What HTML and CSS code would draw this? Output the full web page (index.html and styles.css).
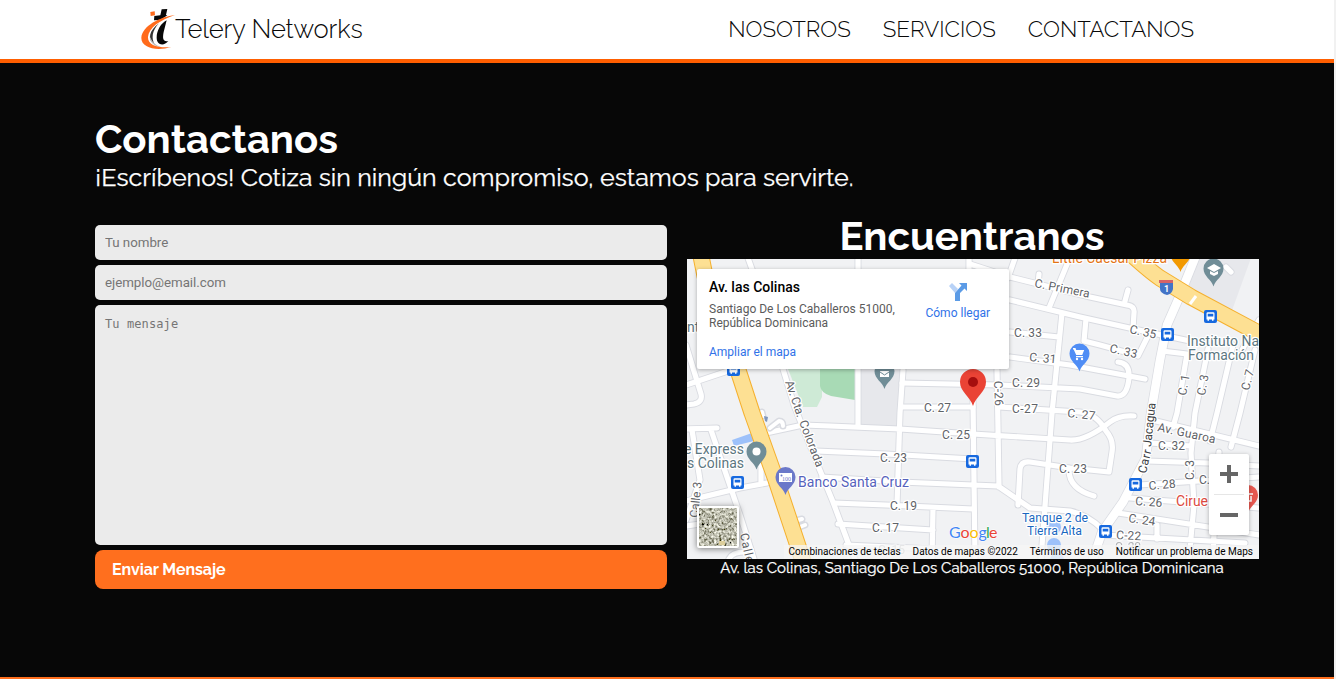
FILE: index.html
```html
<!DOCTYPE html>
<html lang="es">
<head>
<meta charset="utf-8">
<title>Telery Networks</title>
<link rel="stylesheet" href="styles.css">
</head>
<body>
<header class="header">
  <a class="brand">
    <svg class="logo" viewBox="24 24 114 126" aria-hidden="true">
      <path fill="#ff6b1c" d="M58 36l13-2 1 12-13 2z"/>
      <path fill="#080808" d="M70 48l18-2 4-18 17-1-4 18 4 1-12 8-12 6-16 1zM107 61C90 70 77 91 77 113c0 22 21 27 35 10-16 3-18-7-14-27z"/>
      <path fill="#333" d="M84 70c-30 21-36 50-13 64-10-18-9-41 13-64z"/>
      <path fill="#bbb" d="M56 108c0 20 14 32 35 33-18-5-28-15-35-33z"/>
      <path fill="#ff6b1c" d="M132 45C88 50 33 78 31 113c-1 30 45 42 90 28-42 3-71-6-70-30 2-27 37-52 81-66z"/>
    </svg>
    <span class="brand-name">Telery Networks</span>
  </a>
  <nav class="nav"><a>NOSOTROS</a><a>SERVICIOS</a><a>CONTACTANOS</a></nav>
</header>
<main class="contact">
  <h1 class="title">Contactanos</h1>
  <p class="lead">¡Escríbenos! Cotiza sin ningún compromiso, estamos para servirte.</p>
  <div class="columns">
    <form class="form">
      <input class="field" type="text" placeholder="Tu nombre">
      <input class="field" type="email" placeholder="ejemplo@email.com">
      <textarea class="field message" placeholder="Tu mensaje"></textarea>
      <button class="send" type="button">Enviar Mensaje</button>
    </form>
    <section class="find">
      <h2 class="title find-title">Encuentranos</h2>
      <div class="map">
        <svg class="map-canvas" viewBox="687 259 572 300">
          <defs>
            <g id="roads">
              <path d="M748 258l5 14M783 369l11 36 25 63 14 34 16 43 6 14M858 258v168M686 345l15 49q2 8-7 10l-8 1M686 385l42-14M686 429l31-1M711 430l30 88 13 41M686 501l54-13 27-5M761 483v-18M692 430l8 50-14 40M686 526l14-2M729 559q3-7 16-7"/>
              <path d="M766 433l37-8 27 1 70 3 73 5 97 6q16 1 40-18 9-7 24-6M816 451l70 3 87 5M822 477l78 5 98 4 32 22 40 3q18 4 32 18M834 503l52 2 87 4M838 524l95 6M846 545l87 4M903 370l-3 43-3 92M933 508l-1 51M969 258v12M973 400l2 159M997 370l2 117"/>
              <path d="M902 383l98 2 80 4 37 7q10 1 12-18 1-15-11-16M901 407h72M999 407l81 5q17 2 26 19 8 9 6 21l-3 20-39-4-40-6q-9-1-10 7l-2 36M1010 332l49 5M1010 357l60 8 75 14M1010 300l70 17 54 12 56 12M970 264l40 13 80 20 37 8q8 1 7 8l-1 15M1125 301l3-11M1015 258l-7 20M1039 274l-1 10M1068 262l-19 46M1062 313l-10 100-11 146M1086 319l-2 22q25 6 54 15l10-20"/>
              <path d="M1162 351l25 3-10 59-4 14M1208 349l-13 64-4 40 3 52-5 54M1233 345l-16 68-7 28M1255 350l-15 63-9 34M1259 320l-17 30M1219 452l-6 100M1152 420l107 26M1150 443l41 3M1147 461l61 2 51 3M1139 485l120-8M1130 498l129 10M1118 513l141 22M1104 535l141 8M1157 525v14M1069 470q0 19 25 26M1226 267l5 5"/>
            </g>
            <path id="carr" d="M1195 258l-17 42-11 25-7 35-9 53-5 45-23 44-21 30-9 27"/>
            <path id="hwy" d="M701 256l4 20 33 94 14 43 24 67 27 81M1131 254q20 18 29 24l31 19 75 40"/>
            <g id="bus">
              <rect x="-6.5" y="-6.5" width="13" height="13" rx="2" fill="#1769df"/>
              <path fill="#fff" fill-rule="evenodd" d="M-4-3q0-1.3 1.3-1.3h5.4Q4-4.300 4-3v6H3v1.300H1.500V3h-3v1.300H-3V3h-1zM-2.800-2.800v2.700h5.600v-2.700z"/>
            </g>
            <path id="pin" d="M0 17C-2 10-10 7-10-1a10 10 0 0 1 20 0C10 7 2 10 0 17z"/>
          </defs>
          <rect x="687" y="259" width="572" height="300" fill="#f1f2f4"/>
          <path fill="#e7e8ec" d="M861 369h40l-3 58-38-1zM1196 258h55l-21 58-44-24z"/>
          <path fill="#ceead6" d="M788 369h34v28l-5 10h-14z"/>
          <path fill="#a8dab5" d="M820 369h35v31l-24-4q-10-3-11-10z"/>
          <path fill="#9dc1fa" d="M732 440l20-7 2 8-20 5z"/>
          <use href="#roads" class="casing"/><use href="#carr" class="casing wide"/>
          <use href="#roads" class="road"/><use href="#carr" class="road wide"/>
          <path class="casing" d="M763 416l-1-4M770 428l9-7q4 0 4 5M794 521l8-2M797 528l8-3"/>
          <path class="road small" d="M763 416l-1-4M770 428l9-7q4 0 4 5M794 521l8-2M797 528l8-3"/>
          <use href="#hwy" class="hwy-edge"/><use href="#hwy" class="hwy"/>
          <path stroke="#fff" stroke-width="3" d="M1190 304l6-8"/>
          <path fill="#8097bd" d="M764 416l4 1-1 5-2-1z"/>
          <g fill="#9dc1fa"><circle cx="1054" cy="527" r="7"/><circle cx="1054" cy="545" r="7"/><circle cx="1057" cy="560" r="7"/></g>

          <g class="street">
            <text x="1034" y="287" textLength="56" transform="rotate(11 1034 287)">C. Primera</text>
            <text x="1014" y="337" textLength="28">C. 33</text>
            <text x="1029" y="361" textLength="27" transform="rotate(5 1029 361)">C. 31</text>
            <text x="1012" y="387" textLength="28">C. 29</text>
            <text x="924" y="412" textLength="27">C. 27</text>
            <text x="1012" y="413" textLength="26">C-27</text>
            <text x="1067" y="417" textLength="28" transform="rotate(6 1067 417)">C. 27</text>
            <text x="1129" y="333" textLength="27" transform="rotate(12 1129 333)">C. 35</text>
            <text x="1109" y="352" textLength="28" transform="rotate(13 1109 352)">C. 33</text>
            <text x="942" y="439" textLength="28">C. 25</text>
            <text x="880" y="462" textLength="27">C. 23</text>
            <text x="1059" y="473" textLength="28">C. 23</text>
            <text x="890" y="510" textLength="27">C. 19</text>
            <text x="872" y="532" textLength="27">C. 17</text>
            <text x="878" y="554" textLength="27" opacity=".45">C. 15</text>
            <text x="994" y="381" textLength="25" transform="rotate(88 994 381)">C-26</text>
            <text x="1186" y="396" textLength="21" transform="rotate(-80 1186 396)">C. 1</text>
            <text x="1205" y="396" textLength="21" transform="rotate(-80 1205 396)">C. 3</text>
            <text x="1249" y="391" textLength="21" transform="rotate(-76 1249 391)">C. 7</text>
            <text x="1194" y="480" textLength="20" transform="rotate(-90 1194 480)">C. 3</text>
            <text x="1157" y="431" textLength="59" transform="rotate(12 1157 431)">Av. Guaroa</text>
            <text x="1158" y="450" textLength="27">C. 32</text>
            <text x="1149" y="490" textLength="27" transform="rotate(-5 1149 490)">C. 28</text>
            <text x="1199" y="484" textLength="11">C.</text>
            <text x="1135" y="505" textLength="27" transform="rotate(4 1135 505)">C. 26</text>
            <text x="1128" y="522" textLength="27" transform="rotate(8 1128 522)">C. 24</text>
            <text x="1116" y="539" textLength="25" transform="rotate(3 1116 539)">C-22</text>
            <text x="1115" y="551" textLength="26" opacity=".45">C. 20</text>
            <text x="785" y="382" textLength="38" transform="rotate(71 785 382)">Av. Cta.</text>
            <text x="799" y="422" textLength="49" transform="rotate(69 799 422)">Colorada</text>
            <text x="698" y="518" textLength="36" transform="rotate(-84 698 518)">Calle 3</text>
            <text x="740" y="534" textLength="30" transform="rotate(78 740 534)">Calle</text>
            <text class="dark" x="1146" y="474" textLength="24" transform="rotate(-77 1146 474)">Carr</text>
            <text class="dark" x="1151" y="447" textLength="44" transform="rotate(-84 1151 447)">Jacagua</text>
          </g>
          <g class="poi">
            <text x="687" y="332" fill="#5c7680">nt</text>
            <text x="684" y="454" textLength="60" fill="#5c7680">e Express</text>
            <text x="687" y="468" textLength="57" fill="#5c7680">s Colinas</text>
            <text x="798" y="487" textLength="111" fill="#5662bc">Banco Santa Cruz</text>
            <text x="1187" y="346" textLength="72" fill="#5c7680">Instituto Na</text>
            <text x="1188" y="360" textLength="66" fill="#5c7680">Formación</text>
            <text x="1052" y="263" textLength="115" fill="#e37416">Little Caesar Pizza</text>
            <text x="1176" y="506" textLength="32" fill="#dd4940">Cirue</text>
            <text class="tank" x="1022" y="522" textLength="66">Tanque 2 de</text>
            <text class="tank" x="1027" y="535" textLength="55">Tierra Alta</text>
          </g>
          <use href="#bus" x="733.5" y="369.5"/><use href="#bus" x="737.5" y="482.5"/><use href="#bus" x="972.5" y="461.5"/><use href="#bus" x="1210.5" y="316.5"/><use href="#bus" x="1167.5" y="334.5"/><use href="#bus" x="1135.5" y="484.5"/><use href="#bus" x="1105.5" y="531.5"/>
          <path fill="#4274c7" d="M1160 283h13v6q-1 5-6 6-7-2-7-6z"/><path fill="#d66368" d="M1159 280h14v3h-14z"/>
          <text x="1164" y="292" class="shield">1</text>
          <g fill="#708d97"><use href="#pin" x="1213.5" y="269.5"/><use href="#pin" x="884.5" y="372"/><use href="#pin" x="756.5" y="452.5"/></g>
          <path fill="#fff" d="M1207 268l7-4 7 4-7 4zM1210 271l4 2 4-2v3l-4 2-4-2zM880 371h9v6h-9z"/>
          <path stroke="#708d97" fill="none" d="M880 372l4.500 3 4.500-3"/>
          <circle cx="756.5" cy="451.5" r="4" fill="#fff"/>
          <use href="#pin" x="785.5" y="478" fill="#6b78c9"/><rect x="779" y="473" width="13" height="9" fill="#fff"/><text x="782" y="481" class="bill">100</text><circle cx="781.500" cy="475.500" r="1" fill="#6b78c9"/>
          <use href="#pin" x="1079.5" y="354.5" fill="#4f8df5"/><path fill="#fff" d="M1073 348h2.500l.7 2h8l-2 5h-6l-2.500-5.500H1073zM1076 356h7v1.300h-7z"/><circle cx="1077" cy="359" r="1.200" fill="#fff"/><circle cx="1082" cy="359" r="1.200" fill="#fff"/>
          <use href="#pin" x="1180.5" y="255" fill="#f29900"/>
          <use href="#pin" x="1248" y="496" fill="#e65850"/><path fill="none" stroke="#fff" stroke-width="1.500" d="M1246 494h7M1251 496v5h-4"/>
          <path fill="#ea4335" d="M973 406c-3-10-13-14-13-24a13 13 0 0 1 26 0c0 10-10 14-13 24z"/><circle cx="973" cy="382" r="5" fill="#a50e0e"/>
          <g class="google"><text x="949" y="538" fill="#4285f4">G</text><text x="960.500" y="538" fill="#ea4335">o</text><text x="969.500" y="538" fill="#fbbc04">o</text><text x="978.500" y="538" fill="#4285f4">g</text><text x="986" y="538" fill="#34a853">l</text><text x="989" y="538" fill="#ea4335">e</text></g>
        </svg>
        <div class="place">
          <div class="place-info">
            <strong class="place-name">Av. las Colinas</strong>
            <span class="place-address">Santiago De Los Caballeros 51000,<br>República Dominicana</span>
            <a class="link">Ampliar el mapa</a>
          </div>
          <a class="link route">
            <svg class="route-icon" viewBox="0 0 20 20"><path fill="#b8d2f7" d="M1 4l3-3 6 6-3 4z"/><path fill="#5b9be6" d="M11 1h8v8l-2.500-2.500L12 11v8H7v-8l6.500-7.500z"/></svg>
            Cómo llegar
          </a>
        </div>
        <svg class="satellite" viewBox="0 0 42 42">
          <filter id="grain" x="0" y="0" width="1" height="1"><feTurbulence type="fractalNoise" baseFrequency=".4" numOctaves="3" seed="8"/><feColorMatrix values="1.2 .9 0 0 -.55  1.2 .9 0 0 -.55  1.1 .85 0 0 -.56  0 0 0 0 1"/></filter>
          <rect width="42" height="42" rx="2" fill="#fff"/><rect x="2" y="2" width="38" height="38" filter="url(#grain)"/>
          <path fill="#ddcf9c" d="M22 35h6v4h-6z"/>
        </svg>
        <div class="zoom"><span class="zoom-in"></span><i class="rule"></i><span class="zoom-out"></span></div>
        <div class="credits"><span>Combinaciones de teclas</span><span>Datos de mapas ©2022</span><span>Términos de uso</span><span>Notificar un problema de Maps</span></div>
      </div>
      <p class="address">Av. las Colinas, Santiago De Los Caballeros 51000, República Dominicana</p>
    </section>
  </div>
</main>
</body>
</html>
```
FILE: styles.css
```css
* { box-sizing: border-box; }
html { background: #f1f1f1; }
body { margin: 0; width: 1334px; height: 679px; overflow: hidden; font-family: Raleway, Lato, sans-serif; }
h1, h2, p { margin: 0; }
.header { height: 63px; background: #fff; border-bottom: 4px solid #ff5e00; padding: 0 140px 0 139px; display: flex; justify-content: space-between; color: #080808; font-weight: 300; }
.brand { display: flex; padding-top: 8px; }
.logo { width: 38px; height: 42px; }
.brand-name { font-size: 25.6px; line-height: 42px; margin-left: -2px; letter-spacing: -.15px; white-space: nowrap; }
.nav { display: flex; font-size: 22.4px; line-height: 58px; gap: 32px; }
.contact { height: 616px; padding: 53px 75px 0 95px; background: #070707; border-bottom: 2px solid #ff6f1e; color: #fff; }
.title { font-size: 40px; line-height: 46px; font-weight: 700; }
.lead { font-size: 25px; line-height: 29px; white-space: nowrap; margin-top: 1px; -webkit-text-stroke: .25px #fff; }
.columns { display: grid; grid-template-columns: 572px 572px; gap: 20px; margin-top: 20px; }
.form { display: flex; flex-direction: column; gap: 5px; padding-top: 13px; }
.field { display: block; width: 100%; height: 35px; padding: 10px; border: 0; border-radius: 5px; background: #ebebeb; font: 13.333px Roboto, sans-serif; letter-spacing: -.04px; resize: none; }
.field::placeholder { color: #757575; opacity: 1; }
.message { height: 240px; padding-top: 12px; font: 12px "DejaVu Sans Mono", monospace; letter-spacing: .1px; }
.send { height: 39px; border: 0; border-radius: 8px; background: #ff6f1e; color: #fff; text-align: left; padding: 0 17px; font: 700 16px/39px Raleway, Lato, sans-serif; letter-spacing: -.08px; }
.find { text-align: center; padding-top: 1px; }
.find-title { margin-left: -2px; }
.map { position: relative; width: 572px; height: 300px; overflow: hidden; text-align: left; font-family: Roboto, sans-serif; }
.map-canvas { display: block; width: 572px; height: 300px; }
.casing, .road, .hwy, .hwy-edge { fill: none; stroke-linejoin: round; stroke-linecap: round; }
.casing { stroke: #d9dbe1; stroke-width: 7px; }
.road { stroke: #fff; stroke-width: 5.2px; }
.casing.wide { stroke-width: 10px; }
.road.wide { stroke-width: 8.500px; }
.road.small { stroke-width: 4px; }
.hwy-edge { stroke: #f5b02e; stroke-width: 17px; }
.hwy { stroke: #fde093; stroke-width: 15px; }
.street text, .poi text { paint-order: stroke; stroke: #fff; stroke-width: 2.500px; stroke-linejoin: round; }
.street text { font-size: 12px; fill: #5f6368; }
.street .dark { fill: #3c4043; }
.poi text { font-size: 14px; }
.poi .tank { font-size: 12.300px; fill: #1967c0; }
.shield { font-size: 9px; font-weight: 700; fill: #fff; }
.bill { font: 6px "Liberation Serif", serif; fill: #6b78c9; }
.google { font: 16px Lato, sans-serif; paint-order: stroke; stroke: #fff; stroke-width: 1px; }
.place { position: absolute; left: 10px; top: 10px; width: 312px; height: 100px; display: flex; justify-content: space-between; padding: 10px 19px 0 12px; background: #fff; border-radius: 2px; box-shadow: 0 1px 4px rgba(0,0,0,.3); font-size: 12px; }
.place-info { display: flex; flex-direction: column; }
.place-name { font-size: 14px; line-height: 17px; font-weight: 500; color: #000; }
.place-address { color: #5b5b5b; line-height: 14px; margin: 6px 0 14px; white-space: nowrap; }
.link { color: #3072e8; line-height: 16px; }
.route { display: flex; flex-direction: column; align-items: center; padding-top: 3px; gap: 3px; }
.route-icon { width: 20px; height: 20px; }
.satellite { position: absolute; left: 10px; top: 247px; width: 42px; height: 42px; filter: drop-shadow(0 1px 3px rgba(0,0,0,.5)); }
.zoom { position: absolute; right: 10px; top: 195px; width: 40px; height: 81px; display: grid; grid-template-rows: 40px 1px 40px; place-items: center; background: #fff; border-radius: 2px; box-shadow: 0 1px 4px rgba(0,0,0,.3); }
.rule { width: 30px; height: 1px; background: #e6e6e6; }
.zoom-in, .zoom-out { width: 18px; height: 18px; background: linear-gradient(#666, #666) center / 18px 4px no-repeat; }
.zoom-in { background: linear-gradient(#666, #666) center / 18px 4px no-repeat, linear-gradient(#666, #666) center / 4px 18px no-repeat; }
.credits { position: absolute; right: 0; bottom: 0; height: 14px; padding: 0 6px 0 5px; display: flex; gap: 12px; background: rgba(245,245,245,.75); color: #000; font-size: 10px; line-height: 14px; white-space: nowrap; }
.address { font-size: 15px; line-height: 18px; white-space: nowrap; position: relative; left: -1px; -webkit-text-stroke: .25px #fff; }
```
